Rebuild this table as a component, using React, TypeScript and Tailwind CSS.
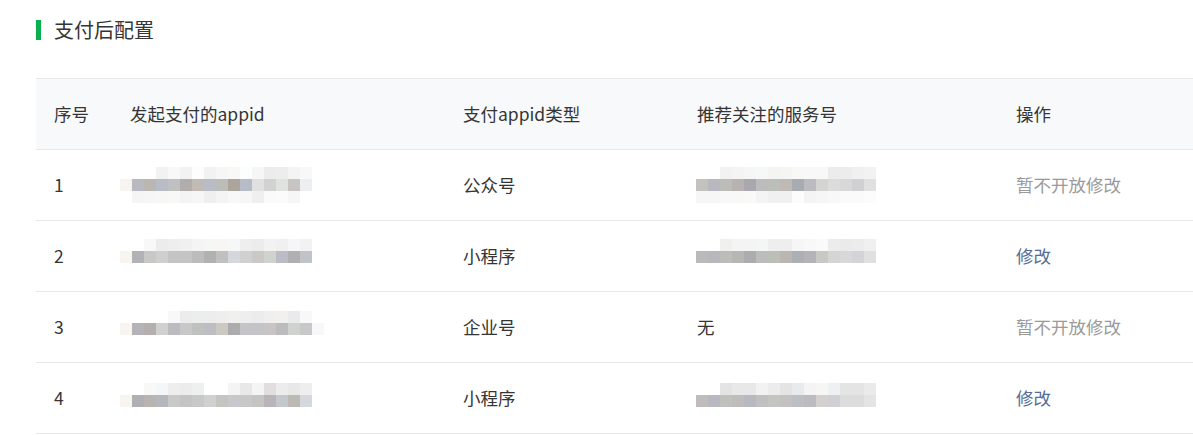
import React from 'react';

type MosaicRow = { start: number; colors: string[] };

interface Row {
  no: string;
  appid: { top: number; rows: MosaicRow[] };
  type: string;
  service: { top: number; rows: MosaicRow[] } | null;
  editable: boolean;
}

// pixelated (blurred) ids, one 12px block per colour
const rows: Row[] = [
  {
    no: '1',
    appid: {
      top: 17,
      rows: [
        { start: 3, colors: ['#f2f2f2', '#f8f8f8', '#f2f2f2', '#fdfdfd', '#f2f2f2', '#f6f6f6', '#f8f8f6', '#fcfdfd', '#f6f6f6', '#ececec', '#ededed', '#f4f4f4', '#f8f8f8'] },
        { start: 0, colors: ['#f8f4f0', '#b8bac0', '#bab7b2', '#b8bcc4', '#c0c0c2', '#b2acab', '#bfbab4', '#b8bcc4', '#bcbcb8', '#aca59d', '#b5bcc5', '#e0e0e0', '#d2d2d2', '#e0e2e0', '#c8c4c4', '#eceef0'] },
        { start: 1, colors: ['#f5f5f5', '#f6f6f6', '#f7f7f7', '#f8f8f6', '#f4f4f4', '#f6f6f6', '#efefef', '#f4f4f4', '#f8f8f8', '#f6f6f6', '#efefef', '#fafafa', '#fbfbfb', '#f6f6f6'] },
      ],
    },
    type: '公众号',
    service: {
      top: 17,
      rows: [
        { start: 2, colors: ['#f2f2f2', '#f4f4f4', '#f6f6f4', '#f6f8f8', '#f6f4f2', '#f4f6f4', '#f8f8f6', '#f8f8f8', '#f8f8f8', '#ececec', '#ececec', '#f0f0f0', '#f2f2f2'] },
        { start: 0, colors: ['#c4c2be', '#b8b8be', '#bcbcb8', '#b8b2b2', '#a8a8ae', '#bcbcbc', '#bcbeb8', '#c0bab6', '#a8acb0', '#bcbcc0', '#d4d4d2', '#dcdcdc', '#d8d8d8', '#d0d0d2', '#e0e0e0'] },
        { start: 0, colors: ['#f6f6f6', '#f6f6f6', '#f8f8f8', '#f8f8f6', '#f9f9f9', '#f4f4f4', '#f0f0f0', '#f0f0f0', '#fcfcfc', '#f4f4f4', '#f6f6f6', '#f8f8f8', '#fafafa', '#fafafa', '#fcfcfc'] },
      ],
    },
    editable: false,
  },
  {
    no: '2',
    appid: {
      top: 18,
      rows: [
        { start: 2, colors: ['#f8f8f8', '#ececec', '#eeeeee', '#f0f0f0', '#f4f4f4', '#f6f6f6', '#f8f6f4', '#f6f8f8', '#eeeeee', '#ececec', '#f2f2f2', '#f0f0f0', '#f6f6f8', '#f2f2f2'] },
        { start: 0, colors: ['#f8f4f0', '#b0b2b6', '#c8c8c6', '#d0cece', '#c4c4c4', '#c4c4c4', '#bcbcbc', '#b0b2b0', '#c0c0c0', '#d4d8dc', '#d0d0d0', '#ccc8c6', '#d0d2ce', '#bcbcc4', '#b0b0b2', '#c0c4c8'] },
      ],
    },
    type: '小程序',
    service: {
      top: 18,
      rows: [
        { start: 2, colors: ['#f0f0ee', '#f4f4f4', '#f4f4f4', '#f4f6f6', '#eeeeee', '#eeeeee', '#f6f6f6', '#f8f8f8', '#fafafa', '#ececec', '#eaeaea', '#ececec', '#f0f0f0'] },
        { start: 0, colors: ['#bcbab8', '#b8b8bc', '#bcbcb8', '#b8b6b4', '#acacb0', '#bcbcbc', '#bcbeb8', '#bcb6b2', '#acb0b4', '#b4b4b8', '#c8c8c4', '#d4d6d6', '#d8d8d8', '#d4d4d8', '#e0e0e0'] },
      ],
    },
    editable: true,
  },
  {
    no: '3',
    appid: {
      top: 19,
      rows: [
        { start: 4, colors: ['#f8f8f8', '#ececec', '#eceeee', '#ededed', '#eeeeee', '#f0f0ee', '#eeeeee', '#ececec', '#efefef', '#f2f0ee', '#eaeaec', '#f8f8f8'] },
        { start: 0, colors: ['#f8f4f0', '#b4b4b8', '#b4b0b0', '#d0d0d0', '#bcbcc0', '#c8c8c8', '#c0c0be', '#bcbec4', '#ccc8c2', '#acacac', '#c4c4c8', '#c4c4c8', '#c8c4c4', '#bcbcbe', '#d0d2d0', '#c8c8c8', '#f8f8fa'] },
      ],
    },
    type: '企业号',
    service: null,
    editable: false,
  },
  {
    no: '4',
    appid: {
      top: 20,
      rows: [
        { start: 2, colors: ['#f8f8f8', '#f4f6f8', '#eeeeee', '#ececec', '#eef0f0', '#ffffff', '#ffffff', '#f4f4f4', '#e8e8e8', '#f4f4f4', '#e0dede', '#ececec', '#e8e8e8', '#eeeeee'] },
        { start: 0, colors: ['#f8f4f0', '#b0b0b4', '#b8b4b2', '#b4b8bc', '#c8cac8', '#c4c4c4', '#c8c8c8', '#d0d0d0', '#c4c4c0', '#c8c8cc', '#c8c8c8', '#c4c4c0', '#b8b4b8', '#c4c8cc', '#bcb8b4', '#d4d8dc'] },
      ],
    },
    type: '小程序',
    service: {
      top: 20,
      rows: [
        { start: 2, colors: ['#e4e4e4', '#e8e8e8', '#e8e8e8', '#f2f2f2', '#ececec', '#e4e4e4', '#e8eaec', '#f4f4f4', '#f6f6f4', '#eef0f2', '#e4e4e4', '#e4e4e4', '#eaeaea'] },
        { start: 0, colors: ['#c0bcbc', '#b8b8c0', '#c0c0bc', '#c0bcbc', '#b8b8c0', '#c0c0c0', '#c4c4c0', '#c4c2c0', '#bcc0c4', '#bcbcc0', '#d4d0d0', '#d0d0d4', '#dcdcdc', '#dcdcdc', '#e4e4e4'] },
      ],
    },
    editable: true,
  },
];

function Mosaic({ top, rows }: { top: number; rows: MosaicRow[] }) {
  return (
    <div className="flex flex-col self-start" style={{ marginTop: top }}>
      {rows.map((r, i) => (
        <div key={i} className="flex h-[12px]" style={{ marginLeft: r.start * 12 }}>
          {r.colors.map((c, j) => (
            <div key={j} className="w-[12px] h-[12px]" style={{ backgroundColor: c }} />
          ))}
        </div>
      ))}
    </div>
  );
}

const cols = 'grid grid-cols-[84px_343px_234px_319px_1fr]';

export default function App() {
  return (
    <div
      className="w-[1193px] h-[435px] overflow-hidden bg-white pl-[36px] pt-[20px] text-[#353535]"
      style={{ fontFamily: '"Noto Sans CJK SC", "Noto Sans", sans-serif' }}
    >
      {/* section title */}
      <div className="flex items-center h-[20px]">
        <div className="w-[5px] h-[20px] bg-[#07b14e]" />
        <h2 className="ml-[13px] text-[20px] leading-[20px] font-normal">支付后配置</h2>
      </div>

      <div className="mt-[38px] text-[17.5px]">
        <div className={`${cols} h-[72px] items-center bg-[#f8f9fb] border-y border-[#e7e8ec]`}>
          <div className="pl-[18px]">序号</div>
          <div className="pl-[10px]">发起支付的appid</div>
          <div>支付appid类型</div>
          <div>推荐关注的服务号</div>
          <div>操作</div>
        </div>

        {rows.map((row) => (
          <div key={row.no} className={`${cols} h-[71px] items-center border-b border-[#e7e8ec]`}>
            <div className="pl-[18px]">{row.no}</div>
            <div className="flex h-full">
              <Mosaic top={row.appid.top} rows={row.appid.rows} />
            </div>
            <div>{row.type}</div>
            <div className="flex h-full items-center -ml-[1px]">
              {row.service ? <Mosaic top={row.service.top} rows={row.service.rows} /> : <span className="ml-[1px]">无</span>}
            </div>
            <div>
              {row.editable ? (
                <a className="text-[#576b95] cursor-pointer">修改</a>
              ) : (
                <span className="text-[#9a9a9a]">暂不开放修改</span>
              )}
            </div>
          </div>
        ))}
      </div>
    </div>
  );
}
